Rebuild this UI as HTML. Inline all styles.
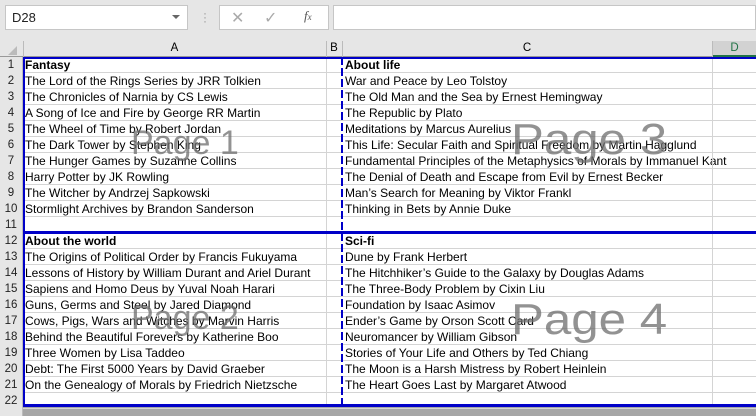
<!DOCTYPE html><html><head><meta charset="utf-8"><style>
body{margin:0;width:756px;height:416px;overflow:hidden;background:#e6e6e6;font-family:"Liberation Sans",sans-serif;position:relative}
.a{position:absolute}
.cell{position:absolute;font-size:12px;line-height:16px;color:#000;white-space:nowrap}
.hl{position:absolute;left:23px;width:733px;height:1px;background:#d4d4d4}
.rn{position:absolute;left:0;width:22px;text-align:center;font-size:11.5px;line-height:16px;color:#222}
.pg{position:absolute;color:rgba(110,110,110,0.75);white-space:nowrap;transform-origin:0 0}
</style></head><body>
<div class="a" style="left:5px;top:5px;width:183px;height:25px;background:#fff;border:1px solid #c6c6c6;box-sizing:border-box"></div>
<div class="a" style="left:12px;top:10px;font-size:13px;color:#222">D28</div>
<div class="a" style="left:172px;top:15px;width:0;height:0;border-left:4px solid transparent;border-right:4px solid transparent;border-top:4px solid #666"></div>
<div class="a" style="left:203px;top:11px;font-size:12px;color:#999;line-height:4px">·<br>·<br>·</div>
<div class="a" style="left:219px;top:5px;width:110px;height:25px;background:#fff;border:1px solid #c6c6c6;box-sizing:border-box"></div>
<div class="a" style="left:231px;top:8px;font-size:16px;color:#aaa">✕</div>
<div class="a" style="left:264px;top:8px;font-size:16px;color:#aaa">✓</div>
<div class="a" style="left:304px;top:8px;font-size:13px;color:#555;font-style:italic;font-family:'Liberation Serif',serif">f<span style="font-size:9px">x</span></div>
<div class="a" style="left:333px;top:5px;width:423px;height:25px;background:#fff;border:1px solid #c6c6c6;box-sizing:border-box"></div>
<div class="a" style="left:0;top:40px;width:756px;height:17px;background:#e6e6e6;border-bottom:1px solid #999;box-sizing:border-box"></div>
<div class="a" style="left:8px;top:46px;width:0;height:0;border-left:9px solid transparent;border-bottom:9px solid #bbb"></div>
<div class="a" style="left:23px;top:41px;width:1px;height:16px;background:#bbb"></div>
<div class="a" style="left:326px;top:41px;width:1px;height:16px;background:#bbb"></div>
<div class="a" style="left:342px;top:41px;width:1px;height:16px;background:#bbb"></div>
<div class="a" style="left:712px;top:41px;width:1px;height:16px;background:#bbb"></div>
<div class="a" style="left:713px;top:41px;width:43px;height:16px;background:#d2d2d2;border-bottom:2px solid #217346;box-sizing:border-box"></div>
<div class="a" style="left:23px;top:42px;width:303px;text-align:center;font-size:11.5px">A</div>
<div class="a" style="left:326px;top:42px;width:16px;text-align:center;font-size:11.5px">B</div>
<div class="a" style="left:342px;top:42px;width:370px;text-align:center;font-size:11.5px">C</div>
<div class="a" style="left:713px;top:42px;width:43px;text-align:center;font-size:11.5px;color:#217346">D</div>
<div class="a" style="left:23px;top:57px;width:733px;height:350px;background:#fff"></div>
<div class="a" style="left:0;top:57px;width:23px;height:359px;background:#e6e6e6;border-right:1px solid #bbb;box-sizing:border-box"></div>
<div class="a" style="left:23px;top:407px;width:733px;height:9px;background:#a6a6a6"></div>
<div id="g"></div>
<script>
var A=["<b>Fantasy</b>","The Lord of the Rings Series by JRR Tolkien","The Chronicles of Narnia by CS Lewis","A Song of Ice and Fire by George RR Martin","The Wheel of Time by Robert Jordan","The Dark Tower by Stephen King","The Hunger Games by Suzanne Collins","Harry Potter by JK Rowling","The Witcher by Andrzej Sapkowski","Stormlight Archives by Brandon Sanderson","","<b>About the world</b>","The Origins of Political Order by Francis Fukuyama","Lessons of History by William Durant and Ariel Durant","Sapiens and Homo Deus by Yuval Noah Harari","Guns, Germs and Steel by Jared Diamond","Cows, Pigs, Wars and Witches by Marvin Harris","Behind the Beautiful Forevers by Katherine Boo","Three Women by Lisa Taddeo","Debt: The First 5000 Years by David Graeber","On the Genealogy of Morals by Friedrich Nietzsche",""];
var C=["<b>About life</b>","War and Peace by Leo Tolstoy","The Old Man and the Sea by Ernest Hemingway","The Republic by Plato","Meditations by Marcus Aurelius","This Life: Secular Faith and Spiritual Freedom by Martin Hagglund","Fundamental Principles of the Metaphysics of Morals by Immanuel Kant","The Denial of Death and Escape from Evil by Ernest Becker","Man’s Search for Meaning by Viktor Frankl","Thinking in Bets by Annie Duke","","<b>Sci-fi</b>","Dune by Frank Herbert","The Hitchhiker’s Guide to the Galaxy by Douglas Adams","The Three-Body Problem by Cixin Liu","Foundation by Isaac Asimov","Ender’s Game by Orson Scott Card","Neuromancer by William Gibson","Stories of Your Life and Others by Ted Chiang","The Moon is a Harsh Mistress by Robert Heinlein","The Heart Goes Last by Margaret Atwood",""];
var h="";
for(var i=0;i<22;i++){var t=57+i*16;
h+='<div class="hl" style="top:'+(t+15)+'px"></div>';
h+='<div class="rn" style="top:'+(t)+'px">'+(i+1)+'</div>';
h+='<div class="cell" style="left:25px;top:'+t+'px">'+A[i]+'</div>';
h+='<div class="cell" style="left:345px;top:'+t+'px">'+C[i]+'</div>';}
h+='<div class="a" style="left:326px;top:57px;width:1px;height:350px;background:#d4d4d4"></div>';
h+='<div class="a" style="left:712px;top:57px;width:1px;height:350px;background:#d4d4d4"></div>';
document.getElementById("g").innerHTML=h;
</script>
<div class="pg" style="left:131px;top:126px;font-size:34px;line-height:34px">Page 1</div>
<div class="pg" style="left:511px;top:118px;font-size:44px;line-height:44px;transform:scaleX(1.12)">Page 3</div>
<div class="pg" style="left:131px;top:301px;font-size:34px;line-height:34px">Page 2</div>
<div class="pg" style="left:511px;top:298px;font-size:44px;line-height:44px;transform:scaleX(1.12)">Page 4</div>
<div class="a" style="left:23px;top:57px;width:733px;height:2px;background:#0000c8"></div>
<div class="a" style="left:23px;top:57px;width:2px;height:350px;background:#0000c8"></div>
<div class="a" style="left:23px;top:231px;width:733px;height:3px;background:#0000c8"></div>
<div class="a" style="left:23px;top:404px;width:733px;height:3px;background:#0000c8"></div>
<div class="a" style="left:341px;top:57px;width:2px;height:350px;background:repeating-linear-gradient(#0000c8 0 8px,transparent 8px 11px)"></div>
</body></html>
